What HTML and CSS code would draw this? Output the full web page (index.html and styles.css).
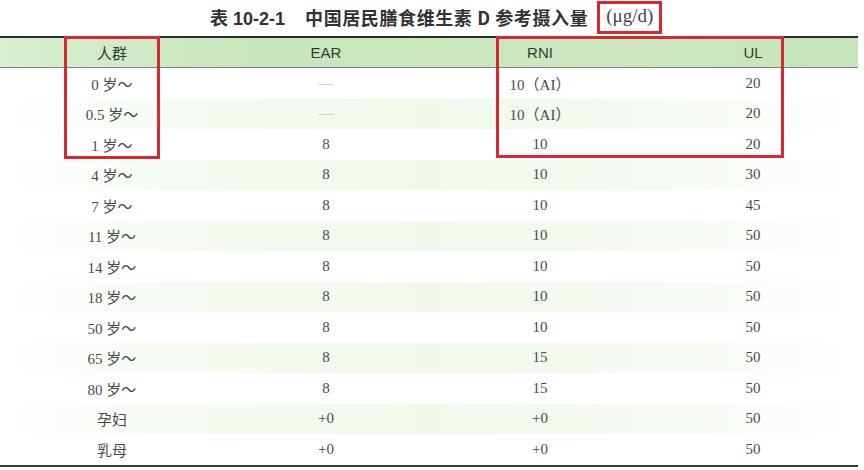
FILE: index.html
```html
<!DOCTYPE html>
<html lang="zh">
<head>
<meta charset="utf-8">
<link rel="stylesheet" href="styles.css">
</head>
<body>
<div class="page">
  <div class="title">
    <span class="title-no">表 10-2-1</span>
    <span class="title-text">中国居民膳食维生素 D 参考摄入量</span>
    <span class="unit">(μg/d)</span>
  </div>
  <div class="table">
    <div class="row head">
      <div class="c">人群</div><div class="c">EAR</div><div class="c">RNI</div><div class="c">UL</div><div></div>
    </div>
    <div class="row"><div class="c">0 岁～</div><div class="c dash">—</div><div class="c">10（AI）</div><div class="c">20</div><div></div></div>
    <div class="row tint"><div class="c">0.5 岁～</div><div class="c dash">—</div><div class="c">10（AI）</div><div class="c">20</div><div></div></div>
    <div class="row"><div class="c">1 岁～</div><div class="c">8</div><div class="c">10</div><div class="c">20</div><div></div></div>
    <div class="row tint"><div class="c">4 岁～</div><div class="c">8</div><div class="c">10</div><div class="c">30</div><div></div></div>
    <div class="row"><div class="c">7 岁～</div><div class="c">8</div><div class="c">10</div><div class="c">45</div><div></div></div>
    <div class="row tint"><div class="c">11 岁～</div><div class="c">8</div><div class="c">10</div><div class="c">50</div><div></div></div>
    <div class="row"><div class="c">14 岁～</div><div class="c">8</div><div class="c">10</div><div class="c">50</div><div></div></div>
    <div class="row tint"><div class="c">18 岁～</div><div class="c">8</div><div class="c">10</div><div class="c">50</div><div></div></div>
    <div class="row"><div class="c">50 岁～</div><div class="c">8</div><div class="c">10</div><div class="c">50</div><div></div></div>
    <div class="row tint"><div class="c">65 岁～</div><div class="c">8</div><div class="c">15</div><div class="c">50</div><div></div></div>
    <div class="row"><div class="c">80 岁～</div><div class="c">8</div><div class="c">15</div><div class="c">50</div><div></div></div>
    <div class="row tint"><div class="c">孕妇</div><div class="c">+0</div><div class="c">+0</div><div class="c">50</div><div></div></div>
    <div class="row"><div class="c">乳母</div><div class="c">+0</div><div class="c">+0</div><div class="c">50</div><div></div></div>
    <div class="mark mark-left"></div>
    <div class="mark mark-right"></div>
  </div>
</div>
</body>
</html>
```
FILE: styles.css
```css
html, body {
  margin: 0;
  padding: 0;
  background: #ffffff;
}
.page {
  width: 864px;
  height: 470px;
  overflow: hidden;
  position: relative;
}
.title {
  height: 36px;
  display: flex;
  align-items: center;
  padding-left: 210px;
  font-family: "Noto Sans CJK SC", "Liberation Sans", sans-serif;
  font-weight: 700;
  font-size: 18px;
  color: #333;
  box-sizing: border-box;
  padding-bottom: 2px;
}
.title-no {
  font-family: "Liberation Sans", "Noto Sans CJK SC", sans-serif;
  font-weight: 700;
  font-size: 18px;
  margin-right: 20px;
}
.title-text {
  margin-right: 9px;
  letter-spacing: 0.6px;
}
.unit {
  font-family: "Liberation Serif", serif;
  font-weight: 400;
  font-size: 19px;
  color: #444;
  border: 3px solid #d42a2f;
  padding: 0 6px 2px 6px;
  height: 25px;
  display: flex;
  align-items: center;
}
.table {
  position: relative;
  width: 858px;
  border-top: 2px solid #2e2e2e;
  border-bottom: 2px solid #3a3a3a;
}
.row {
  display: grid;
  grid-template-columns: 224px 204px 224px 202px 1fr;
  height: 30.5px;
  align-items: center;
  font-family: "Liberation Serif", "Noto Sans CJK SC", serif;
  font-size: 15px;
  color: #4a4a4a;
}
.row .c {
  text-align: center;
}
.row.tint {
  background: linear-gradient(90deg, #ffffff 0%, #f5fbf2 20%, #f1f9ed 50%, #f6fbf3 80%, #ffffff 100%);
}
.row.head {
  height: 29px;
  background: linear-gradient(90deg, #d8efd0 0%, #c8e6bc 30%, #cbe8c0 70%, #c6e5ba 100%);
  border-bottom: 1.5px solid #7a8a7a;
  font-family: "Liberation Sans", "Noto Sans CJK SC", sans-serif;
  font-size: 15px;
  color: #2f3f2f;
}
.dash {
  color: #b5b5b5;
}
.mark {
  position: absolute;
  border: 3px solid #d42a2f;
  box-sizing: border-box;
}
.mark-left {
  left: 64px;
  top: -2px;
  width: 96px;
  height: 123px;
}
.mark-right {
  left: 496px;
  top: -2px;
  width: 288px;
  height: 122px;
}
```
